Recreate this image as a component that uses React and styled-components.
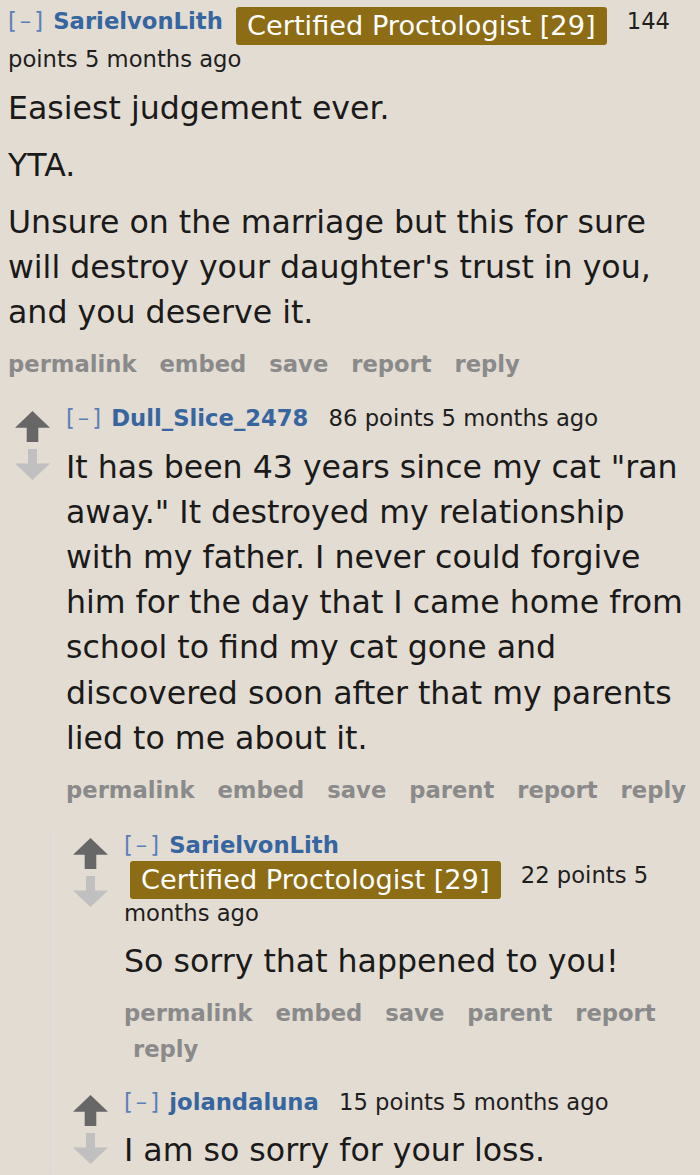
import React from 'react';
import styled, { createGlobalStyle } from 'styled-components';

const GlobalStyle = createGlobalStyle`
  html, body { margin: 0; padding: 0; background: #e3dcd3; }
  body { font-family: "DejaVu Sans", Verdana, sans-serif; color: #1e1e1e; }
`;

const Page = styled.div`
  width: 700px;
  height: 1175px;
  overflow: hidden;
  padding-top: 7px;
  box-sizing: border-box;
`;

const CommentBox = styled.div`
  padding-left: ${p => (p.$root ? 0 : 15)}px;
  & + & { margin-top: 20px; }
`;

const Row = styled.div`
  display: flex;
  align-items: flex-start;
`;

const Midcol = styled.div`
  width: 35px;
  flex-shrink: 0;
  display: flex;
  flex-direction: column;
  align-items: center;
  gap: 7px;
  padding-top: 7px;
  margin-right: 16px;
`;

const Entry = styled.div`
  flex: 1;
  min-width: 0;
  padding-left: ${p => (p.$root ? 8 : 0)}px;
`;

const Tagline = styled.div`
  font-size: 22.7px;
  line-height: 29.5px;
  color: #1e1e1e;
`;

const Expand = styled.span`
  color: #5a80b8;
  letter-spacing: 3px;
`;

const Author = styled.span`
  color: #36659f;
  font-weight: bold;
`;

const Flair = styled.span`
  display: inline-block;
  vertical-align: -5.8px;
  margin-left: 6px;
  padding: 0 11px;
  height: 38px;
  line-height: 38px;
  font-size: 27.2px;
  color: #ffffff;
  background: #8c6c14;
  border-radius: 3px;
  white-space: nowrap;
`;

const Score = styled.span`
  margin-left: 13px;
`;

const Body = styled.div`
  margin-top: 11px;
  font-size: 31.6px;
  line-height: 45.2px;
  color: #1a1a1a;
`;

const Para = styled.p`
  margin: 0;
  & + & { margin-top: 11.8px; }
`;

const Buttons = styled.ul`
  list-style: none;
  margin: 10.5px 0 0 0;
  padding: 0;
  font-size: 22.7px;
  line-height: 36.5px;
  font-weight: bold;
  color: #8a8a8a;
`;

const ButtonItem = styled.li`
  display: inline;
  white-space: nowrap;
  padding-left: 9px;
  padding-right: 6px;
  &:first-child { padding-left: 0; }
`;

const ChildList = styled.div`
  margin-top: ${p => (p.$root ? 22 : 23)}px;
  margin-left: ${p => (p.$root ? 0 : 35)}px;
  padding-left: ${p => (p.$root ? 0 : 7)}px;
  border-left: ${p => (p.$root ? 'none' : '1px dotted #d4d2ec')};
`;

const UpArrow = () => (
  <svg width="35" height="31" viewBox="0 0 35 31">
    <polygon
      points="17.5,0 35,16.7 23.3,16.7 23.3,31 11.7,31 11.7,16.7 0,16.7"
      fill="#676767"
    />
  </svg>
);

const DownArrow = () => (
  <svg width="35" height="31" viewBox="0 0 35 31">
    <polygon
      points="13,0 22,0 22,14.5 35,14.5 17.5,31 0,14.5 13,14.5"
      fill="#c0c0c0"
    />
  </svg>
);

const Comment = ({ c, root }) => (
  <CommentBox $root={root}>
    <Row>
      {!root && (
        <Midcol>
          <UpArrow />
          <DownArrow />
        </Midcol>
      )}
      <Entry $root={root}>
        <Tagline>
          <Expand>[–]</Expand> <Author>{c.author}</Author>{' '}
          {c.flair && (
            <>
              <Flair>{c.flair}</Flair>{' '}
            </>
          )}
          <Score>{c.score} points</Score> {c.time}
        </Tagline>
        <Body>
          {c.body.map((t, i) => (
            <Para key={i}>{t}</Para>
          ))}
        </Body>
        {c.buttons && (
          <Buttons>
            {c.buttons.map((b, i) => (
              <React.Fragment key={b}>
                {i > 0 && ' '}
                <ButtonItem>{b}</ButtonItem>
              </React.Fragment>
            ))}
          </Buttons>
        )}
      </Entry>
    </Row>
    {c.children && (
      <ChildList $root={root}>
        {c.children.map((ch, i) => (
          <Comment key={i} c={ch} />
        ))}
      </ChildList>
    )}
  </CommentBox>
);

const FLAIR = 'Certified Proctologist [29]';

const thread = {
  author: 'SarielvonLith',
  flair: FLAIR,
  score: 144,
  time: '5 months ago',
  body: [
    'Easiest judgement ever.',
    'YTA.',
    "Unsure on the marriage but this for sure will destroy your daughter's trust in you, and you deserve it.",
  ],
  buttons: ['permalink', 'embed', 'save', 'report', 'reply'],
  children: [
    {
      author: 'Dull_Slice_2478',
      score: 86,
      time: '5 months ago',
      body: [
        'It has been 43 years since my cat "ran away." It destroyed my relationship with my father. I never could forgive him for the day that I came home from school to find my cat gone and discovered soon after that my parents lied to me about it.',
      ],
      buttons: ['permalink', 'embed', 'save', 'parent', 'report', 'reply'],
      children: [
        {
          author: 'SarielvonLith',
          flair: FLAIR,
          score: 22,
          time: '5 months ago',
          body: ['So sorry that happened to you!'],
          buttons: ['permalink', 'embed', 'save', 'parent', 'report', 'reply'],
        },
        {
          author: 'jolandaluna',
          score: 15,
          time: '5 months ago',
          body: ['I am so sorry for your loss.'],
          buttons: ['permalink', 'embed', 'save', 'parent', 'report', 'reply'],
        },
      ],
    },
  ],
};

export default function App() {
  return (
    <>
      <GlobalStyle />
      <Page>
        <Comment c={thread} root />
      </Page>
    </>
  );
}
